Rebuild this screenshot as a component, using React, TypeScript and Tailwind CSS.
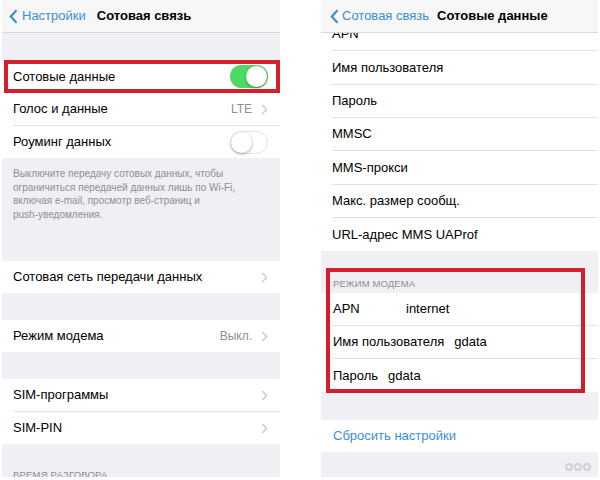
import type { ReactNode } from 'react';

const font = { fontFamily: '"Liberation Sans", Arial, sans-serif' };

const Chevron = () => (
  <svg width="7" height="11" viewBox="0 0 7 11" className="shrink-0">
    <path d="M1.2 1l4.4 4.5L1.2 10" fill="none" stroke="#c7c7cc" strokeWidth="1.4" />
  </svg>
);

const BackChevron = () => (
  <svg width="9" height="15" viewBox="0 0 9 15" className="shrink-0">
    <path d="M7.5 1.2L1.8 7.5l5.7 6.3" fill="none" stroke="#3d8ed3" strokeWidth="2.2" />
  </svg>
);

const Toggle = ({ on }: { on: boolean }) =>
  on ? (
    <div className="w-[38px] h-[23px] rounded-full bg-[#4cd964] flex items-center justify-end p-[1px]">
      <div className="w-[21px] h-[21px] rounded-full bg-white shadow-[0_1px_3px_rgba(0,0,0,0.35)]" />
    </div>
  ) : (
    <div className="w-[38px] h-[23px] rounded-full bg-white border border-[#e3e3e8] flex items-center">
      <div className="w-[21px] h-[21px] rounded-full bg-white shadow-[0_1px_3px_rgba(0,0,0,0.35)]" />
    </div>
  );

interface RowProps {
  children: ReactNode;
  right?: ReactNode;
  sep?: boolean;
  h: string;
  pl?: string;
}

const Row = ({ children, right, sep, h, pl = 'pl-[11px]' }: RowProps) => (
  <div className={`${h} ${pl} bg-white flex shrink-0`}>
    <div className={`flex-1 flex items-center pr-[12px] ${sep ? 'border-b border-[#e1e1e5]' : ''}`}>
      <div className="flex-1 flex items-center text-[13px] text-black">{children}</div>
      {right}
    </div>
  </div>
);

const Gray = ({ h, children }: { h: string; children?: ReactNode }) => (
  <div className={`${h} shrink-0 bg-[#efeff4]`}>{children}</div>
);

const LeftScreen = () => (
  <div className="w-[278px] h-[477px] bg-[#efeff4] flex flex-col overflow-hidden">
    <div className="h-[33px] shrink-0 bg-[#f7f7f8] border-b border-[#d9d9dd] flex items-center pl-[7px] gap-[4px]">
      <BackChevron />
      <span className="text-[13px] text-[#3d8ed3]">Настройки</span>
      <span className="text-[13px] font-bold text-black ml-[7px]">Сотовая связь</span>
    </div>
    <Gray h="h-[27px]" />
    <div className="relative">
      <Row h="h-[33px]" right={<Toggle on />}>
        Сотовые данные
      </Row>
      <div className="absolute top-0 bottom-0 left-[2px] right-[0px] border-[4px] border-[#d21f2e]" />
    </div>
    <Row
      h="h-[33px]"
      sep
      right={
        <div className="flex items-center gap-[9px]">
          <span className="text-[12px] text-[#8e8e93]">LTE</span>
          <Chevron />
        </div>
      }
    >
      Голос и данные
    </Row>
    <Row h="h-[32px]" right={<Toggle on={false} />}>
      Роуминг данных
    </Row>
    <Gray h="h-[103px]">
      <p className="px-[11px] pt-[9px] text-[10px] leading-[13.5px] text-[#8e8e93]">
        Выключите передачу сотовых данных, чтобы
        <br />
        ограничиться передачей данных лишь по Wi-Fi,
        <br />
        включая e-mail, просмотр веб-страниц и
        <br />
        push-уведомления.
      </p>
    </Gray>
    <Row h="h-[32px]" right={<Chevron />}>
      Сотовая сеть передачи данных
    </Row>
    <Gray h="h-[27px]" />
    <Row
      h="h-[32px]"
      right={
        <div className="flex items-center gap-[9px]">
          <span className="text-[12px] text-[#8e8e93]">Выкл.</span>
          <Chevron />
        </div>
      }
    >
      Режим модема
    </Row>
    <Gray h="h-[27px]" />
    <Row h="h-[33px]" sep right={<Chevron />}>
      SIM-программы
    </Row>
    <Row h="h-[32px]" right={<Chevron />}>
      SIM-PIN
    </Row>
    <Gray h="h-[40px]">
      <div className="px-[11px] pt-[24px] text-[9.5px] text-[#8e8e93] tracking-[0.2px]">ВРЕМЯ РАЗГОВОРА</div>
    </Gray>
  </div>
);

const RightScreen = () => (
  <div className="w-[277px] h-[477px] bg-[#efeff4] flex flex-col overflow-hidden">
    <div className="relative z-10 h-[33px] shrink-0 bg-[#f7f7f8] border-b border-[#d9d9dd] flex items-center pl-[9px] gap-[3px]">
      <BackChevron />
      <span className="text-[13px] text-[#3d8ed3]">Сотовая связь</span>
      <span className="text-[13px] font-bold text-black ml-[5px]">Сотовые данные</span>
    </div>
    <div className="flex-1 flex flex-col overflow-hidden">
      <div className="-mt-[15px] flex flex-col">
        <Row h="h-[33px]" sep>APN</Row>
        <Row h="h-[34px]" sep>Имя пользователя</Row>
        <Row h="h-[33px]" sep>Пароль</Row>
        <Row h="h-[33px]" sep>MMSC</Row>
        <Row h="h-[34px]" sep>MMS-прокси</Row>
        <Row h="h-[33px]" sep>Макс. размер сообщ.</Row>
        <Row h="h-[33px]">URL-адрес MMS UAProf</Row>
      </div>
      <div className="relative flex flex-col">
        <Gray h="h-[42px]">
          <div className="pl-[12px] pt-[26px] text-[9.5px] text-[#8e8e93] tracking-[0.1px]">РЕЖИМ МОДЕМА</div>
        </Gray>
        <Row h="h-[33px]" sep pl="pl-[12px]">
          <span className="w-[73px]">APN</span>
          <span>internet</span>
        </Row>
        <Row h="h-[33px]" sep pl="pl-[12px]">
          <span className="mr-[10px]">Имя пользователя</span>
          <span>gdata</span>
        </Row>
        <Row h="h-[33px]" pl="pl-[12px]">
          <span className="mr-[10px]">Пароль</span>
          <span>gdata</span>
        </Row>
        <div className="absolute top-[17px] left-[5px] right-[13px] -bottom-[1px] border-[4px] border-[#d21f2e]" />
      </div>
      <Gray h="h-[28px]" />
      <Row h="h-[32px]" pl="pl-[12px]">
        <span className="text-[#3d8ed3]">Сбросить настройки</span>
      </Row>
      <Gray h="h-[30px]">
        <div className="flex justify-end gap-[1px] pr-[7px] pt-[11px]">
          {[0, 1, 2].map((i) => (
            <div key={i} className="w-[8px] h-[8px] rounded-full border-[2px] border-[#cfcfd4]" />
          ))}
        </div>
      </Gray>
    </div>
  </div>
);

export default function App() {
  return (
    <div className="w-[600px] h-[480px] bg-white flex pl-[2px] gap-[41px] overflow-hidden" style={font}>
      <LeftScreen />
      <RightScreen />
    </div>
  );
}
